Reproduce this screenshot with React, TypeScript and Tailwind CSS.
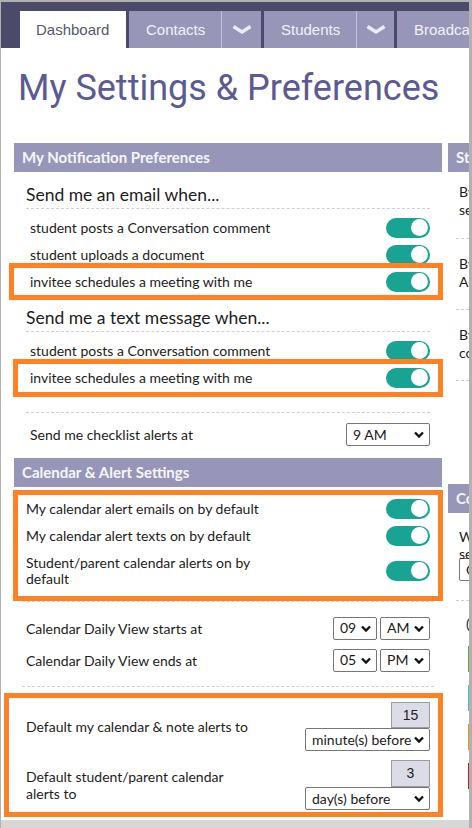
import clsx from 'clsx';

const lato = "font-['Lato',sans-serif]";

function SelectChevron() {
    return (
        <svg width="10" height="7" viewBox="0 0 10 7" className="shrink-0">
            <path d="M1 1.5l4 4 4-4" fill="none" stroke="#111" strokeWidth="2.4" />
        </svg>
    );
}

function TabChevron() {
    return (
        <svg width="20" height="9" viewBox="0 0 20 9">
            <path d="M1.5 1.5L10 7l8.5-5.5" fill="none" stroke="#ececf4" strokeWidth="3.4" strokeLinejoin="round" />
        </svg>
    );
}

function Toggle() {
    return (
        <div className="flex h-[20px] w-[44px] shrink-0 items-center justify-end rounded-full bg-[#18a393] pr-[2px]">
            <div className="h-[17px] w-[17px] rounded-full bg-white" />
        </div>
    );
}

function Select({ value, className }: { value: string; className?: string }) {
    return (
        <div
            className={clsx(
                'flex h-[23px] items-center justify-between rounded-[2px] border border-[#767676] bg-white pl-[6px] pr-[5px] text-[14px] leading-none text-[#1a1a1a]',
                className
            )}
        >
            <span>{value}</span>
            <SelectChevron />
        </div>
    );
}

function Highlight({ className }: { className: string }) {
    return <div className={clsx('pointer-events-none absolute border-[5px] border-[#ff8124]', className)} />;
}

function ToggleRow({ label }: { label: string }) {
    return (
        <div className="flex h-[27px] items-center justify-between px-[12px]">
            <span className="pl-[4px]">{label}</span>
            <Toggle />
        </div>
    );
}

function SectionHeader({ title }: { title: string }) {
    return (
        <div className="h-[29px] whitespace-nowrap bg-[#9896b8] pl-[8px] text-[15px] font-bold leading-[29px] text-[#f6f6fa]">
            {title}
        </div>
    );
}

function NavTab({ label, menuWidth }: { label: string; menuWidth?: string }) {
    return (
        <div className="flex h-[37px] bg-[#9896b8] text-[15px] text-[#f2f2f7]">
            <div className="w-[92px] pl-[17px] leading-[37px]">{label}</div>
            {menuWidth && (
                <div className={clsx('flex items-center justify-center border-l border-[#c2c1d8]', menuWidth)}>
                    <TabChevron />
                </div>
            )}
        </div>
    );
}

function SideNote({ first, second, className }: { first: string; second: string; className: string }) {
    return (
        <div className={clsx('mx-[8px] border-b border-dashed border-[#cfcfcf] text-[14px] leading-[18px]', className)}>
            <div className="whitespace-nowrap pl-[3px]">{first}</div>
            <div className="whitespace-nowrap pl-[3px]">{second}</div>
        </div>
    );
}

export default function App() {
    return (
        <div className="flex h-[828px] w-[472px] flex-col overflow-hidden border-l border-r-[3px] border-t-2 border-[#b1b1b1] bg-white">
            {/* top navigation */}
            <div className="flex h-[46px] shrink-0 items-end gap-[3px] overflow-hidden bg-[#4b4a68] pl-[19px] font-['Liberation_Sans',Arial,sans-serif]">
                <div className="h-[37px] w-[106px] shrink-0 bg-white pl-[16px] text-[15px] leading-[37px] text-[#555867]">
                    Dashboard
                </div>
                <NavTab label="Contacts" menuWidth="w-[40px]" />
                <NavTab label="Students" menuWidth="w-[38px]" />
                <div className="h-[37px] w-[120px] shrink-0 bg-[#9896b8] pl-[17px] text-[15px] leading-[37px] text-[#f2f2f7]">
                    Broadcast
                </div>
            </div>

            <h1 className="mt-[16px] h-[48px] shrink-0 whitespace-nowrap pl-[17px] font-['Roboto',sans-serif] text-[36px] font-normal leading-[48px] text-[#5c5a92]">
                My Settings &amp; Preferences
            </h1>

            <div className={clsx('mt-[31px] flex shrink-0 overflow-hidden text-[#1c1c1c]', lato)}>
                {/* left column */}
                <div className="ml-[13px] w-[428px] shrink-0 pb-[10px] text-[14px]">
                    <SectionHeader title="My Notification Preferences" />

                    <div className="mx-[12px] border-b border-dashed border-[#cfcfcf] pb-[1px] pt-[11px] text-[17.5px] leading-[24px]">
                        Send me an email when...
                    </div>
                    <div className="pt-[5px]">
                        <ToggleRow label="student posts a Conversation comment" />
                        <ToggleRow label="student uploads a document" />
                        <div className="relative">
                            <ToggleRow label="invitee schedules a meeting with me" />
                            <Highlight className="-bottom-[5px] -left-[5px] -right-[1px] -top-[5px]" />
                        </div>
                    </div>

                    <div className="mx-[12px] border-b border-dashed border-[#cfcfcf] pb-[1px] pt-[11px] text-[17.5px] leading-[24px]">
                        Send me a text message when...
                    </div>
                    <div className="pt-[5px]">
                        <ToggleRow label="student posts a Conversation comment" />
                        <div className="relative">
                            <ToggleRow label="invitee schedules a meeting with me" />
                            <Highlight className="-bottom-[6px] -left-[1px] -right-[1px] -top-[5px]" />
                        </div>
                    </div>

                    <div className="mx-[12px] mt-[21px] border-t border-dashed border-[#cfcfcf] pt-[8px]">
                        <div className="flex h-[27px] items-center justify-between">
                            <span className="pl-[4px]">Send me checklist alerts at</span>
                            <Select value="9 AM" className="w-[84px]" />
                        </div>
                    </div>

                    <div className="mt-[10px]">
                        <SectionHeader title="Calendar & Alert Settings" />
                    </div>

                    <div className="mx-[8px] border-b border-dashed border-[#cfcfcf] pb-[9px] pt-[8px]">
                        <div className="relative -mx-[8px]">
                            <div className="flex h-[27px] items-center justify-between px-[12px]">
                                <span>My calendar alert emails on by default</span>
                                <Toggle />
                            </div>
                            <div className="flex h-[27px] items-center justify-between px-[12px]">
                                <span>My calendar alert texts on by default</span>
                                <Toggle />
                            </div>
                            <div className="flex h-[43px] items-center justify-between px-[12px]">
                                <span className="w-[232px] leading-[16px]">Student/parent calendar alerts on by default</span>
                                <Toggle />
                            </div>
                            <Highlight className="-bottom-[9px] -left-[1px] -right-[1px] -top-[5px]" />
                        </div>
                    </div>

                    <div className="mx-[8px] border-b border-dashed border-[#cfcfcf] py-[10px]">
                        <div className="flex h-[32px] items-center justify-between px-[4px]">
                            <span>Calendar Daily View starts at</span>
                            <div className="flex gap-[3px]">
                                <Select value="09" className="w-[44px]" />
                                <Select value="AM" className="w-[50px]" />
                            </div>
                        </div>
                        <div className="flex h-[32px] items-center justify-between px-[4px]">
                            <span>Calendar Daily View ends at</span>
                            <div className="flex gap-[3px]">
                                <Select value="05" className="w-[44px]" />
                                <Select value="PM" className="w-[50px]" />
                            </div>
                        </div>
                    </div>

                    <div className="relative mt-[15px] flex flex-col gap-[9px]">
                        <div className="flex items-center justify-between px-[12px]">
                            <span className="w-[232px] leading-[17px]">Default my calendar &amp; note alerts to</span>
                            <div className="flex flex-col items-end">
                                <div className="h-[26px] w-[39px] border border-[#9c9c9c] bg-[#dcdce8] text-center font-['Liberation_Sans',Arial,sans-serif] text-[14px] leading-[24px] text-[#222]">
                                    15
                                </div>
                                <Select value="minute(s) before" className="w-[125px]" />
                            </div>
                        </div>
                        <div className="flex items-center justify-between px-[12px]">
                            <span className="w-[232px] leading-[17px]">Default student/parent calendar alerts to</span>
                            <div className="flex flex-col items-end">
                                <div className="h-[27px] w-[39px] border border-[#9c9c9c] bg-[#dcdce8] text-center font-['Liberation_Sans',Arial,sans-serif] text-[14px] leading-[25px] text-[#222]">
                                    3
                                </div>
                                <Select value="day(s) before" className="w-[125px]" />
                            </div>
                        </div>
                        <Highlight className="-bottom-[7px] -left-[10px] -right-[1px] -top-[9px]" />
                    </div>
                </div>

                {/* right column, cut off by the window */}
                <div className="ml-[6px] w-[200px] shrink-0 text-[14px]">
                    <SectionHeader title="Student Notification Settings" />
                    <SideNote first="By default, alerts are" second="sent to students" className="pb-[19px] pt-[11px]" />
                    <SideNote first="By default, students see" second="ACT scores" className="pb-[18px] pt-[16px]" />
                    <SideNote first="By default, parents can" second="contact me" className="pb-[18px] pt-[16px]" />

                    <div className="mt-[103px]">
                        <SectionHeader title="Counselor Calendar" />
                    </div>
                    <div className="mx-[8px] border-b border-dashed border-[#cfcfcf] pb-[19px] pt-[15px]">
                        <div className="whitespace-nowrap pl-[3px] leading-[17px]">When students request a</div>
                        <div className="whitespace-nowrap pl-[3px] leading-[17px]">session, show</div>
                        <Select value="Calendar" className="ml-[3px] mt-[-4px] w-[120px]" />
                    </div>
                    <div className="mx-[8px] whitespace-nowrap pl-[10px] pt-[14px] leading-[18px]">(colour coded)</div>
                    <div className="ml-[20px] mt-[13px] flex flex-col gap-[13px]">
                        <div className="h-[26px] border-l-4 border-[#6aaa3a] pl-2">Meeting</div>
                        <div className="h-[26px] border-l-4 border-[#4cb8c6] pl-2">Call</div>
                        <div className="h-[26px] border-l-4 border-[#ef8f1e] pl-2">Task</div>
                        <div className="h-[26px] border-l-4 border-[#d0161a] pl-2">Deadline</div>
                    </div>
                </div>
            </div>

            <div className="mt-auto h-[8px] shrink-0 bg-[#d7d7d7]" />
        </div>
    );
}
